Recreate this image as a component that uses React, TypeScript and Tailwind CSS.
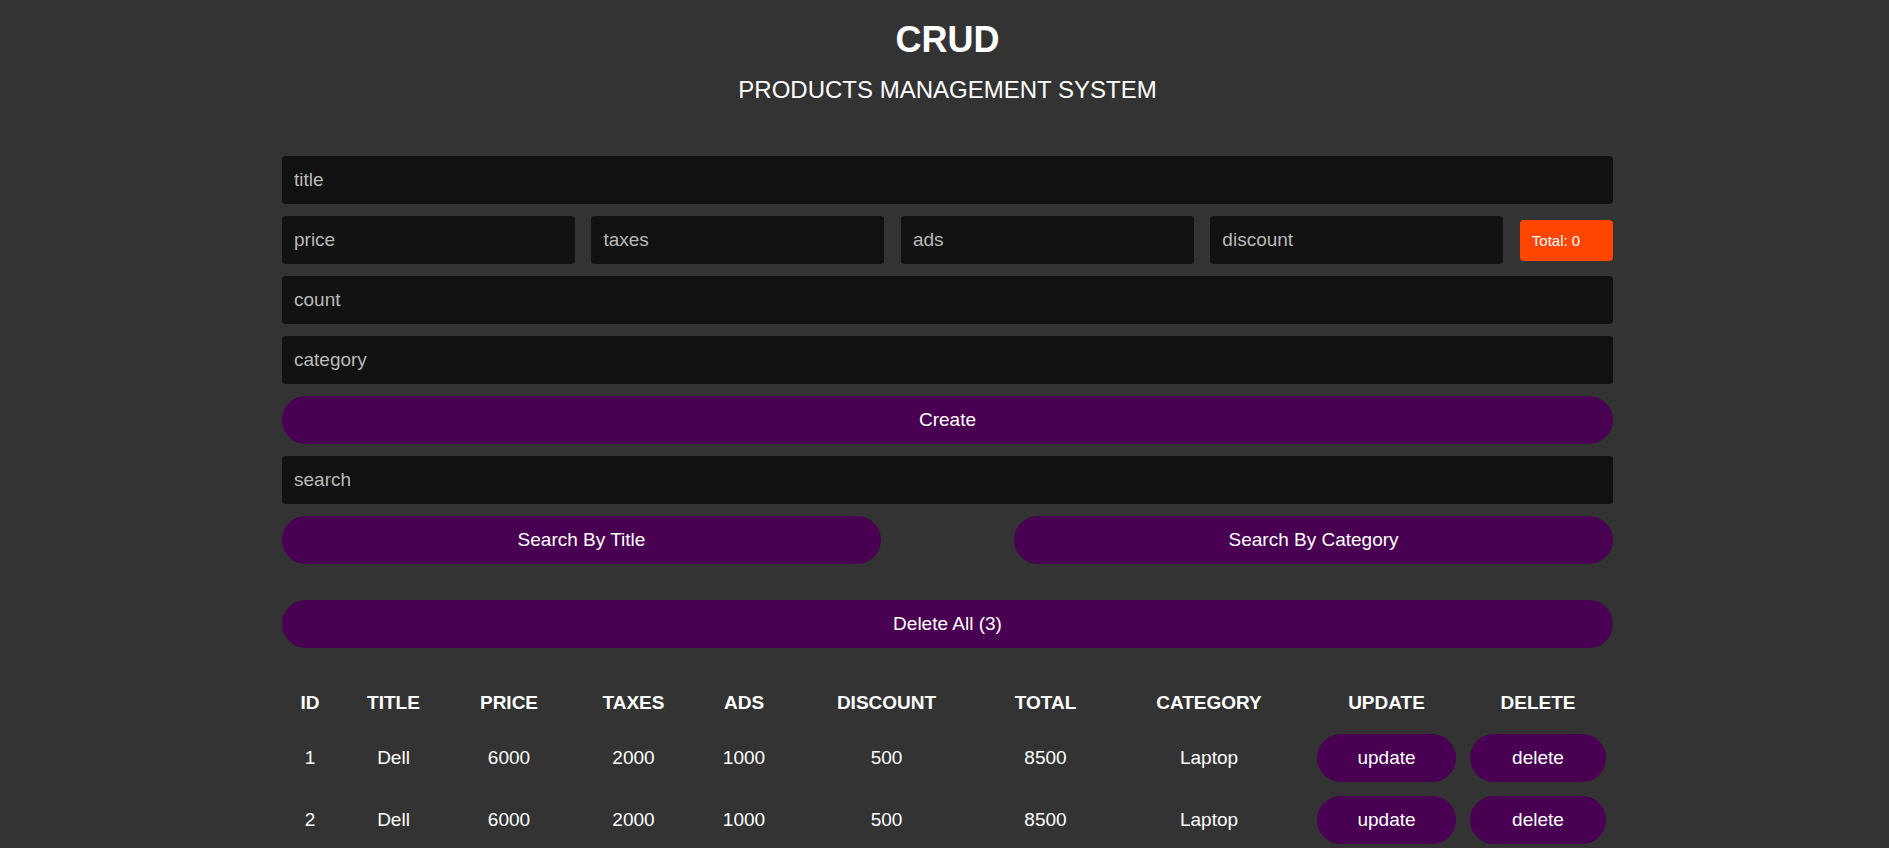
import React from "react";

const rows = [
  { id: 1, title: "Dell", price: 6000, taxes: 2000, ads: 1000, discount: 500, total: 8500, category: "Laptop" },
  { id: 2, title: "Dell", price: 6000, taxes: 2000, ads: 1000, discount: 500, total: 8500, category: "Laptop" },
  { id: 3, title: "Dell", price: 6000, taxes: 2000, ads: 1000, discount: 500, total: 8500, category: "Laptop" },
];

const inputCls =
  "h-[48px] rounded-[4px] bg-[#111111] px-[12px] text-[19px] text-white placeholder:text-[#bababa] outline-none border-0";
const btnCls =
  "h-[48px] rounded-full bg-[#490052] text-[19px] text-white flex items-center justify-center";

export default function App() {
  return (
    <div
      className="min-h-screen w-full bg-[#333333] text-white pl-[6px]"
      style={{ fontFamily: '"Liberation Sans", Arial, sans-serif' }}
    >
      <div className="mx-auto w-[1331px] pb-[40px]">
        <div className="flex flex-col items-center">
          <h1 className="pt-[22px] text-[36px] leading-[36px] font-bold">CRUD</h1>
          <p className="mt-[20px] text-[24px] leading-[24px]">PRODUCTS MANAGEMENT SYSTEM</p>
        </div>

        <div className="mt-[54px] flex flex-col gap-[12px]">
          <input className={inputCls + " w-full"} placeholder="title" />
          <div className="flex items-center justify-between">
            <input className={inputCls + " w-[22%]"} placeholder="price" />
            <input className={inputCls + " w-[22%]"} placeholder="taxes" />
            <input className={inputCls + " w-[22%]"} placeholder="ads" />
            <input className={inputCls + " w-[22%]"} placeholder="discount" />
            <div className="flex h-[41px] w-[7%] items-center rounded-[4px] bg-[#ff4500] pl-[12px] pt-[2px] text-[15px] text-white">
              Total: 0
            </div>
          </div>
          <input className={inputCls + " w-full"} placeholder="count" />
          <input className={inputCls + " w-full"} placeholder="category" />
          <button className={btnCls + " w-full"}>Create</button>
          <input className={inputCls + " w-full"} placeholder="search" />
          <div className="flex justify-between">
            <button className={btnCls + " w-[45%]"}>Search By Title</button>
            <button className={btnCls + " w-[45%]"}>Search By Category</button>
          </div>
        </div>

        <button className={btnCls + " mt-[36px] w-full"}>Delete All (3)</button>

        <table className="mt-[31px] w-full border-collapse text-center">
          <colgroup>
            <col className="w-[56px]" />
            <col className="w-[111px]" />
            <col className="w-[120px]" />
            <col className="w-[129px]" />
            <col className="w-[92px]" />
            <col className="w-[193px]" />
            <col className="w-[125px]" />
            <col className="w-[202px]" />
            <col className="w-[153px]" />
            <col className="w-[150px]" />
          </colgroup>
          <thead>
            <tr className="h-[48px] text-[19px] font-bold">
              <th>ID</th>
              <th>TITLE</th>
              <th>PRICE</th>
              <th>TAXES</th>
              <th>ADS</th>
              <th>DISCOUNT</th>
              <th>TOTAL</th>
              <th>CATEGORY</th>
              <th>UPDATE</th>
              <th>DELETE</th>
            </tr>
          </thead>
          <tbody>
            {rows.map((r) => (
              <tr key={r.id} className="h-[62px] text-[19px]">
                <td>{r.id}</td>
                <td>{r.title}</td>
                <td>{r.price}</td>
                <td>{r.taxes}</td>
                <td>{r.ads}</td>
                <td>{r.discount}</td>
                <td>{r.total}</td>
                <td>{r.category}</td>
                <td className="px-[7px]">
                  <button className={btnCls + " w-full"}>update</button>
                </td>
                <td className="px-[7px]">
                  <button className={btnCls + " w-full"}>delete</button>
                </td>
              </tr>
            ))}
          </tbody>
        </table>
      </div>
    </div>
  );
}
